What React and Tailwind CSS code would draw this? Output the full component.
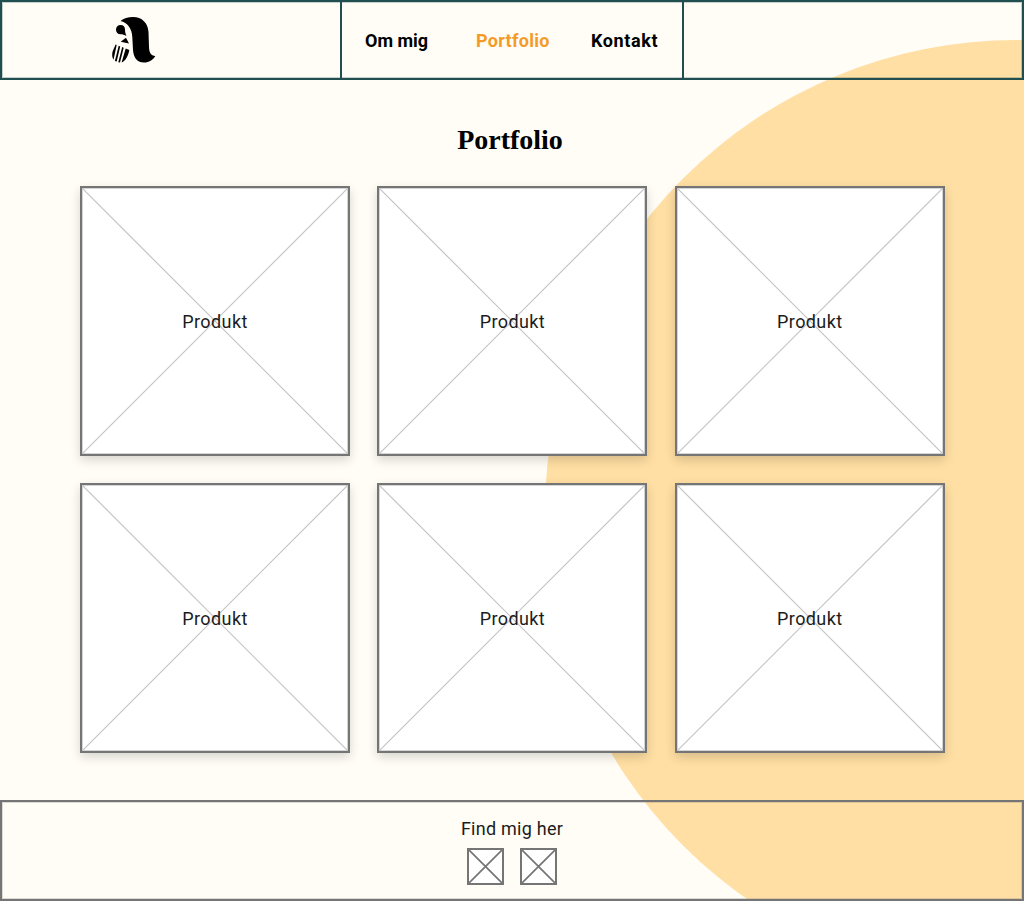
import React from "react";

function Cross({ color, width }) {
  return (
    <svg className="absolute inset-0 w-full h-full" viewBox="0 0 100 100" preserveAspectRatio="none">
      <path d="M0 0L100 100M100 0L0 100" stroke={color} strokeWidth={width} vectorEffect="non-scaling-stroke" fill="none" />
    </svg>
  );
}

function Card() {
  return (
    <div className="relative aspect-square border-2 border-[#757575] bg-white shadow-[0_4px_10px_rgba(0,0,0,0.16),inset_0_0_0_1px_rgba(117,117,117,0.3)] flex items-center justify-center">
      <Cross color="#c4c4c4" width={1.2} />
      <span className="relative pt-[2px] text-[18px] leading-[22px] text-[#1c1c1c] tracking-[0.4px]">Produkt</span>
    </div>
  );
}

function Logo() {
  return (
    <svg width="46" height="48" viewBox="110 16 46 48" className="block">
      <path d="M120.500 21C123.500 18.500 128 17 133 17C142 17 148 23 148.500 32L149 47C149.200 52.500 151 56 155.300 56C153 60 149 62.500 144 62.500C137.500 62.500 133.500 58 133 50L132.300 37C132 29 127.500 22.500 120.500 21Z" fill="#000" />
      <path d="M120.500 25C123.500 25 125 27 125 29.500C125 32 125.500 34 126.500 36C124.500 34.800 122.500 34.300 120.500 34.300C117.800 34.300 116 32.300 116 29.700C116 27 118 25 120.500 25Z" fill="#000" />
      <path d="M120.700 41.700L126 37.700L129 43.500Z" fill="#000" />
      <path d="M115.600 44.500L116.700 45L113.500 59.800C112.200 57.500 111.800 54.500 112.600 51.500Z M118.700 45.700L120.200 46.400L116.700 61.600L114.900 60.900Z M122.200 47.100L123.700 47.800L120 62.600L118.300 62.300Z M125.700 48.500L129.300 50C128.300 55.500 126 60.500 121.600 62.600Z" fill="#000" />
    </svg>
  );
}

export default function App() {
  return (
    <div className="relative w-full h-[901px] overflow-hidden bg-[#fffdf6] flex flex-col font-['Roboto',sans-serif]">
      <div className="absolute left-[545px] top-[40px] w-[944px] h-[944px] rounded-full bg-[#ffdfa3]" />

      <header className="relative h-[80px] shrink-0 border-2 border-[#214f50] shadow-[inset_0_0_0_1px_rgba(33,79,80,0.25)] flex">
        <div className="w-[338px] shrink-0 flex items-center pl-[108px]">
          <Logo />
        </div>
        <nav className="w-[344px] shrink-0 border-x-2 border-[#214f50] flex items-center pl-[23px] pt-[2px] text-[18px] font-bold leading-[22px] text-black">
          <a className="w-[111px]">Om mig</a>
          <a className="w-[115px] text-[#f49b27] tracking-[0.3px]">Portfolio</a>
          <a className="tracking-[0.6px]">Kontakt</a>
        </nav>
      </header>

      <main className="relative flex-1 flex flex-col px-[80px]">
        <h1 className="pr-[4px] text-center font-['Liberation_Serif',serif] font-bold text-[28px] leading-[32px] mt-[44px] text-black">Portfolio</h1>
        <div className="grid grid-cols-[270px_270px_270px] gap-x-[27.400px] gap-y-[27px] mt-[30px]">
          <Card />
          <Card />
          <Card />
          <Card />
          <Card />
          <Card />
        </div>
      </main>

      <footer className="relative h-[101px] shrink-0 border-2 border-[#757575] shadow-[inset_0_0_0_1px_rgba(117,117,117,0.25)] flex flex-col items-center pt-[16px]">
        <span className="text-[18px] leading-[22px] text-[#1c1c1c] tracking-[0.25px]">Find mig her</span>
        <div className="flex gap-[16px] mt-[8px]">
          <div className="relative w-[37px] h-[37px] border-2 border-[#757575] bg-white"><Cross color="#757575" width={1.7} /></div>
          <div className="relative w-[37px] h-[37px] border-2 border-[#757575] bg-white"><Cross color="#757575" width={1.7} /></div>
        </div>
      </footer>
    </div>
  );
}
